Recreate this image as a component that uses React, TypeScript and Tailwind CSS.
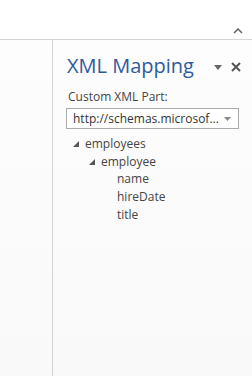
const font = { fontFamily: '"Open Sans", "Noto Sans", sans-serif' };

function Expander() {
  return (
    <svg width="6" height="6" viewBox="0 0 6 6" className="shrink-0">
      <path d="M6 0 L6 6 L0 6 Z" fill="#555" />
    </svg>
  );
}

function TreeRow({ depth, label, open }: { depth: number; label: string; open?: boolean }) {
  return (
    <div className="flex h-[17.7px] items-center" style={{ paddingLeft: depth * 16 }}>
      <div className="flex w-[12px] items-center">{open && <Expander />}</div>
      <span className="text-[12px] leading-none text-[#444]">{label}</span>
    </div>
  );
}

export default function App() {
  return (
    <div className="flex h-[376px] w-[252px] flex-col overflow-hidden bg-white" style={font}>
      {/* ribbon edge */}
      <div className="flex h-[40px] shrink-0 items-end justify-end border-b border-[#d4d4d4] pb-[5px] pr-[9px]">
        <svg width="10" height="6" viewBox="0 0 10 6">
          <path d="M1 5 L5 1 L9 5" fill="none" stroke="#666" strokeWidth="1.6" />
        </svg>
      </div>

      <div className="flex flex-1 bg-gradient-to-b from-[#fdfdfd] to-[#f9f9f9]">
        <div className="w-[53px] shrink-0 border-r border-[#d4d4d4]" />

        <div className="flex-1 pl-[14px] pr-[11px] pt-[12px]">
          <div className="flex items-center justify-between">
            <h1 className="text-[20px] leading-[28px] text-[#2f5b9e]">XML Mapping</h1>
            <div className="mt-[2px] flex items-center gap-[9px]">
              <svg width="8" height="5" viewBox="0 0 8 5">
                <path d="M0 0 L8 0 L4 5 Z" fill="#666" />
              </svg>
              <svg width="10" height="10" viewBox="0 0 10 10">
                <path d="M1 1 L9 9 M9 1 L1 9" stroke="#555" strokeWidth="2" />
              </svg>
            </div>
          </div>

          <div className="mt-[9px] pl-[1px] text-[12px] leading-[16px] text-[#444]">Custom XML Part:</div>

          <div className="mt-[3px] flex h-[21px] w-[173px] -ml-[1px] items-center justify-between border border-[#ababab] bg-white pl-[6px] pr-[7px]">
            <span className="text-[12px] leading-none text-[#333]">http://schemas.microsof...</span>
            <svg width="7" height="4" viewBox="0 0 7 4">
              <path d="M0 0 L7 0 L3.5 4 Z" fill="#888" />
            </svg>
          </div>

          <div className="mt-[6px] pl-[6px]">
            <TreeRow depth={0} label="employees" open />
            <TreeRow depth={1} label="employee" open />
            <TreeRow depth={2} label="name" />
            <TreeRow depth={2} label="hireDate" />
            <TreeRow depth={2} label="title" />
          </div>
        </div>
      </div>
    </div>
  );
}
